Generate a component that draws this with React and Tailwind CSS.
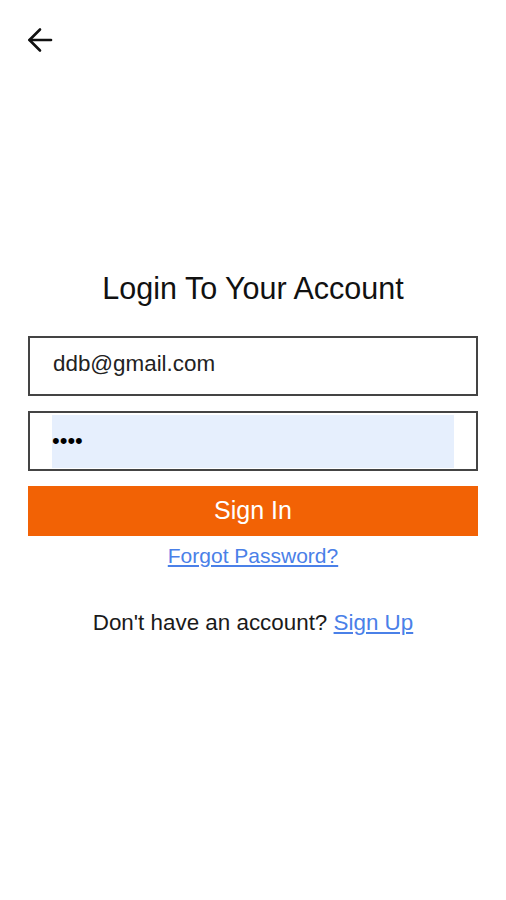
import React from 'react';

const BackArrow = () => (
  <svg width="26" height="26" viewBox="0 0 26 26" fill="none" stroke="#111" strokeWidth="2.6" strokeLinecap="round" strokeLinejoin="round">
    <path d="M24 13H2.5" />
    <path d="M13 2.5L2.5 13L13 23.5" />
  </svg>
);

const App = () => {
  return (
    <div className="min-h-[900px] w-full bg-white font-['Liberation_Sans',Arial,sans-serif] text-[#1a1a1a]">
      {/* Header */}
      <div className="h-[80px] pl-[27px] pt-[27px]">
        <button className="block">
          <BackArrow />
        </button>
      </div>

      <div className="px-[28px]">
        <h1 className="mt-[190px] text-center text-[30.5px] leading-[36px] font-normal text-[#111]">
          Login To Your Account
        </h1>

        <div className="mt-[30px] flex h-[60px] items-center border-2 border-[#444] pb-[4px] pl-[23px]">
          <span className="text-[22.4px] text-[#222]">ddb@gmail.com</span>
        </div>

        <div className="mt-[15px] flex h-[60px] items-center border-2 border-[#444] pl-[22px] pr-[22px]">
          <div className="flex h-[53px] w-full items-center bg-[#e6effd]">
            <span className="text-[22px] leading-none tracking-[0px] text-black">••••</span>
          </div>
        </div>

        <button className="mt-[15px] flex h-[50px] w-full items-center justify-center bg-[#f26205] text-[25px] text-white">
          Sign In
        </button>

        <div className="mt-[6px] text-center">
          <a href="#" className="text-[21px] leading-[28px] text-[#4a80e8] underline">
            Forgot Password?
          </a>
        </div>

        <p className="mt-[39px] text-center text-[22.4px] leading-[28px] text-[#1a1a1a]">
          Don't have an account?{' '}
          <a href="#" className="text-[#4a80e8] underline">Sign Up</a>
        </p>
      </div>
    </div>
  );
};

export default App;
